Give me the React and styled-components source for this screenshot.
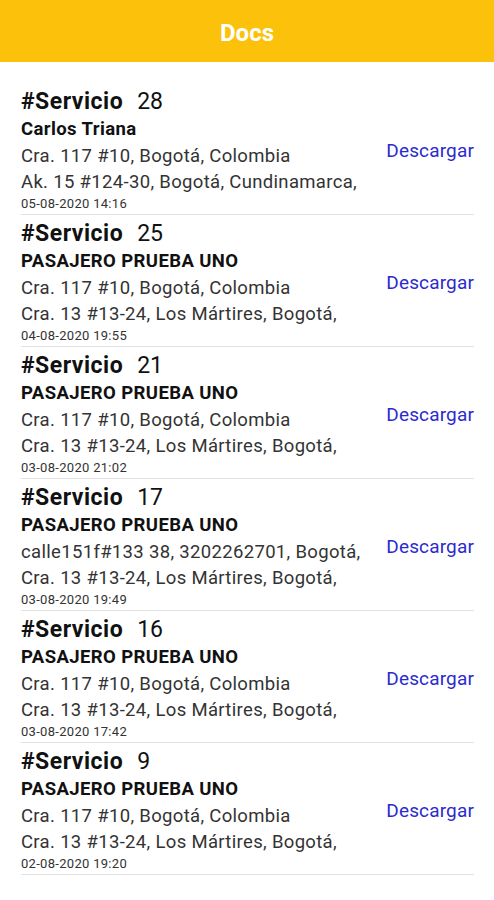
import React from "react";
import styled, { createGlobalStyle } from "styled-components";

const Global = createGlobalStyle`
  html, body { margin: 0; padding: 0; background: #fff; }
  body { font-family: Roboto, "Noto Sans", Arial, sans-serif; }
`;

const Header = styled.header`
  height: 62px;
  box-sizing: border-box;
  padding-top: 3px;
  background: #fcc10a;
  display: flex;
  align-items: center;
  justify-content: center;
  color: #fff;
  font-size: 24px;
  font-weight: 700;
`;

const List = styled.div`
  padding: 21px 20px 0 21px;
`;

const Item = styled.div`
  display: flex;
  align-items: center;
  border-bottom: 1px solid #e2e2e2;
  padding: 5px 0 1px;
`;

const Info = styled.div`
  flex: 1;
  min-width: 0;
  display: flex;
  flex-direction: column;
`;

const Title = styled.div`
  font-size: 23px;
  line-height: 28px;
  color: #111;
  white-space: nowrap;
  b { font-weight: 700; letter-spacing: 0.5px; margin-right: 14px; }
`;

const Name = styled.div`
  font-size: 18.5px;
  letter-spacing: 0.4px;
  font-weight: 700;
  line-height: 27px;
  color: #111;
  white-space: nowrap;
`;

const Address = styled.div`
  font-size: 18.5px;
  letter-spacing: 0.33px;
  line-height: 26px;
  color: #333;
  white-space: nowrap;
`;

const DateText = styled.div`
  font-size: 13px;
  letter-spacing: 0.3px;
  line-height: 18px;
  color: #333;
`;

const Download = styled.a`
  color: #2b2bd0;
  font-size: 19px;
  letter-spacing: 0.15px;
  text-decoration: none;
  cursor: pointer;
  flex-shrink: 0;
`;

const data = [
  { id: 28, name: "Carlos Triana", a1: "Cra. 117 #10, Bogotá, Colombia", a2: "Ak. 15 #124-30, Bogotá, Cundinamarca,", date: "05-08-2020 14:16" },
  { id: 25, name: "PASAJERO PRUEBA UNO", a1: "Cra. 117 #10, Bogotá, Colombia", a2: "Cra. 13 #13-24, Los Mártires, Bogotá,", date: "04-08-2020 19:55" },
  { id: 21, name: "PASAJERO PRUEBA UNO", a1: "Cra. 117 #10, Bogotá, Colombia", a2: "Cra. 13 #13-24, Los Mártires, Bogotá,", date: "03-08-2020 21:02" },
  { id: 17, name: "PASAJERO PRUEBA UNO", a1: "calle151f#133 38, 3202262701, Bogotá,", a2: "Cra. 13 #13-24, Los Mártires, Bogotá,", date: "03-08-2020 19:49" },
  { id: 16, name: "PASAJERO PRUEBA UNO", a1: "Cra. 117 #10, Bogotá, Colombia", a2: "Cra. 13 #13-24, Los Mártires, Bogotá,", date: "03-08-2020 17:42" },
  { id: 9, name: "PASAJERO PRUEBA UNO", a1: "Cra. 117 #10, Bogotá, Colombia", a2: "Cra. 13 #13-24, Los Mártires, Bogotá,", date: "02-08-2020 19:20" },
];

export default function App() {
  return (
    <>
      <Global />
      <Header>Docs</Header>
      <List>
        {data.map((d) => (
          <Item key={d.id}>
            <Info>
              <Title>
                <b>#Servicio</b>
                {d.id}
              </Title>
              <Name>{d.name}</Name>
              <Address>{d.a1}</Address>
              <Address>{d.a2}</Address>
              <DateText>{d.date}</DateText>
            </Info>
            <Download>Descargar</Download>
          </Item>
        ))}
      </List>
    </>
  );
}
